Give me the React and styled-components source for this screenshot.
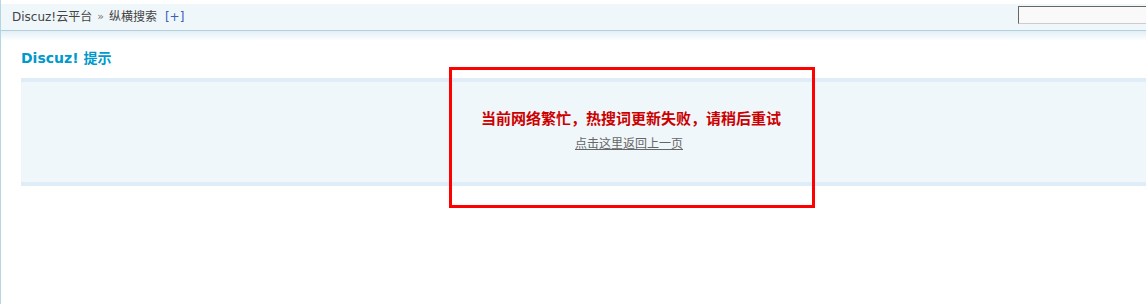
import styled, { createGlobalStyle } from "styled-components";

const GlobalStyle = createGlobalStyle`
    body {
        margin: 0;
        background: #fff;
        overflow: hidden;
        font: 12px "DejaVu Sans", "Noto Sans CJK SC", sans-serif;
        color: #333;
    }
`;

export default function App() {
    return (
        <>
            <GlobalStyle />
            <Page>
                <NavBar>
                    <Crumbs>
                        <CrumbLink href="#">Discuz!云平台</CrumbLink>
                        <Sep>»</Sep>
                        <span>纵横搜索</span>
                        <AddLink href="#">[+]</AddLink>
                    </Crumbs>
                    <SearchInput type="text" />
                </NavBar>
                <NavShadow />
                <Main>
                    <Title>Discuz! 提示</Title>
                    <TipBox>
                        <Message>当前网络繁忙，热搜词更新失败，请稍后重试</Message>
                        <BackLink href="#">点击这里返回上一页</BackLink>
                    </TipBox>
                </Main>
                <Highlight />
            </Page>
        </>
    );
}

const Page = styled.div`
    position: relative;
    width: 1241px;
    min-height: 304px;
    padding-top: 4px;
    box-sizing: border-box;
    border-left: 1px solid #b5d5e0;
`;

const NavBar = styled.div`
    display: flex;
    justify-content: space-between;
    align-items: flex-start;
    height: 26px;
    padding-left: 11px;
    background: #f0f7fb;
    border-bottom: 1px solid #b5cfd9;
`;

const Crumbs = styled.div`
    display: flex;
    align-items: center;
    height: 26px;
    line-height: 26px;
    color: #444;
`;

const CrumbLink = styled.a`
    color: #444;
    text-decoration: none;
`;

const Sep = styled.em`
    font-style: normal;
    color: #777;
    margin: 0 5px 0 5px;
    font-size: 11px;
`;

const AddLink = styled.a`
    margin-left: 8px;
    color: #3a5fb5;
    text-decoration: none;
`;

const SearchInput = styled.input`
    width: 150px;
    height: 18px;
    margin: 2px 73px 0 0;
    padding: 0;
    box-sizing: border-box;
    background: #f9f9f9;
    border: 1px solid;
    border-color: #666 #ccc #ccc #666;
    outline: none;
`;

const NavShadow = styled.div`
    height: 10px;
    background: linear-gradient(#e3eff7, #fff);
`;

const Main = styled.div`
    padding: 7px 0 0 20px;
`;

const Title = styled.h3`
    margin: 0 0 10px;
    height: 20px;
    line-height: 20px;
    font-size: 14px;
    font-weight: bold;
    color: #0099cc;
`;

const TipBox = styled.div`
    display: flex;
    flex-direction: column;
    align-items: center;
    height: 73px;
    padding-top: 27px;
    background: #f0f7fb;
    border-top: 4px solid #deedf8;
    border-bottom: 4px solid #deedf8;
`;

const Message = styled.p`
    margin: 0;
    line-height: 18px;
    font-size: 15px;
    font-weight: bold;
    color: #cc0000;
    font-family: "Noto Sans CJK SC", sans-serif;
`;

const BackLink = styled.a`
    margin: 7px 4px 0 0;
    line-height: 18px;
    font-size: 12px;
    color: #666;
    text-decoration: underline;
    font-family: "Noto Sans CJK SC", sans-serif;
`;

const Highlight = styled.div`
    position: absolute;
    left: 448px;
    top: 67px;
    width: 366px;
    height: 141px;
    box-sizing: border-box;
    border: 3px solid #ff0000;
    pointer-events: none;
`;
